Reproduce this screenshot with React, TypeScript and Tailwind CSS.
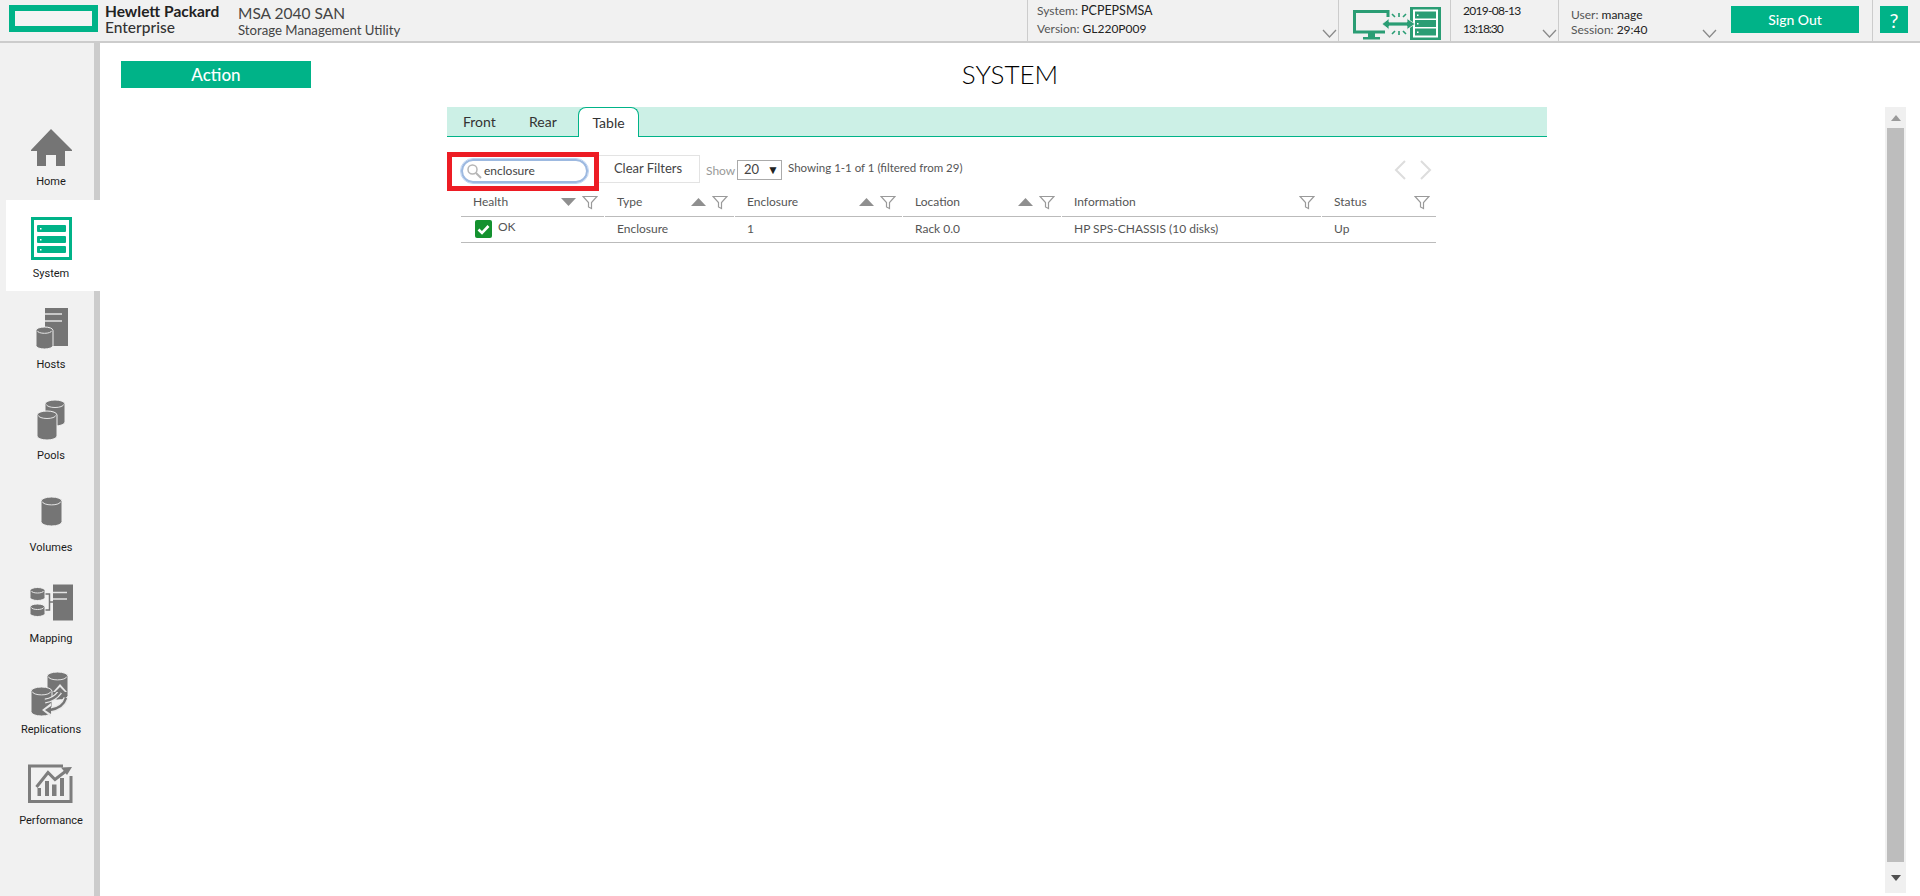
const GRAY = "#757575";
const BG = "#f1f1f1";
const GREEN = "#2a9d74";

function Can({ x, y, w, h }: { x: number; y: number; w: number; h: number }) {
  const r = w / 5;
  return (
    <>
      <path
        d={`M${x} ${y + r}a${w / 2} ${r} 0 0 1 ${w} 0V${y + h - r}a${w / 2} ${r} 0 0 1 ${-w} 0Z`}
        fill={GRAY}
        stroke={BG}
        strokeWidth="1"
      />
      <path d={`M${x + 1.5} ${y + r + 0.5}a${w / 2 - 1.5} ${r - 1} 0 0 0 ${w - 3} 0`} fill="none" stroke="#e4e4e4" strokeWidth="1" />
    </>
  );
}

const navIcons: Record<string, React.ReactNode> = {
  Home: <path d="M30 21L51 42V43H44V58H35V47H25V58H16V43H10V42Z" fill={GRAY} />,
  System: (
    <>
      <rect x="10" y="17" width="41" height="43" fill="#00b388" />
      <rect x="13" y="20" width="35" height="37" fill="#fff" />
      {[25, 36, 46].map((y) => (
        <g key={y}>
          <rect x="16" y={y} width="29" height="7" rx="1" fill="#00b388" />
          <rect x="19" y={y + 3} width="1.5" height="1.5" fill="#fff" />
        </g>
      ))}
    </>
  ),
  Hosts: (
    <>
      <path d="M24 17H47V55H24Z" fill={GRAY} />
      <path d="M24 23H41M24 30H41" stroke="#e4e4e4" strokeWidth="1.5" />
      <Can x={15} y={36} w={17} h={22} />
    </>
  ),
  Pools: (
    <>
      <Can x={24} y={18} w={20} h={26} />
      <Can x={16} y={29} w={20} h={29} />
    </>
  ),
  Volumes: <Can x={20} y={23} w={21} h={29} />,
  Mapping: (
    <>
      <path d="M32 19.5H52V55.5H32Z" fill={GRAY} />
      <path d="M32 27.5H46M32 34H46" stroke="#e4e4e4" strokeWidth="1.5" />
      <path d="M24 29H28.5V45H24M28.5 37H32" fill="none" stroke={GRAY} strokeWidth="1.5" />
      <Can x={9} y={22.5} w={15} h={13} />
      <Can x={9} y={39} w={15} h={12.5} />
    </>
  ),
  Replications: (
    <>
      <Can x={26} y={16} w={21} h={28} />
      <Can x={10} y={31} w={21} h={29} />
      <path d="M24 45Q33 44 39 36M45 42Q42 52 29 54" fill="none" stroke="#e8e8e8" strokeWidth="5" />
      <path d="M39 28L46 36H32ZM21 54L30 47V61Z" fill="#e8e8e8" />
      <path d="M24 45Q33 44 39 36M45 42Q42 52 29 54" fill="none" stroke={GRAY} strokeWidth="2.5" />
      <path d="M39 31L44 36H34ZM24 54L30 50V58Z" fill={GRAY} />
    </>
  ),
  Performance: (
    <>
      <path d="M50 29V54.5H8.5V19H42" fill="none" stroke="#7d7d7d" strokeWidth="3" />
      <path d="M16.5 41H20V49H16.5ZM24 34H28V49H24ZM31 37.5H35.5V49H31ZM39 31H43V49H39Z" fill="#7d7d7d" />
      <path d="M15.5 40L27 25.5L34 32.5L45 24" fill="none" stroke="#7d7d7d" strokeWidth="3" />
      <path d="M51 20L40 20.5L46 28Z" fill="#7d7d7d" />
    </>
  ),
};

const navItems = ["Home", "System", "Hosts", "Pools", "Volumes", "Mapping", "Replications", "Performance"];

function NavItem({ label }: { label: string }) {
  const active = label === "System";
  return (
    <div
      className={
        active
          ? "relative ml-[6px] flex h-[91.3px] w-[94px] shrink-0 flex-col items-center bg-white pl-[2px] pr-[6px]"
          : "flex h-[91.3px] w-[94px] shrink-0 flex-col items-center pl-[8px]"
      }
    >
      <svg width="60" height="64" viewBox="0 0 60 64">
        {navIcons[label]}
      </svg>
      <span className="pt-[1px] font-['Roboto',sans-serif] text-[11px] leading-[18px] text-[#1a1a1a]">{label}</span>
    </div>
  );
}

function Chevron() {
  return (
    <svg width="15" height="9" viewBox="0 0 15 9" className="shrink-0">
      <path d="M1 1L7.5 8L14 1" fill="none" stroke="#8a8a8a" strokeWidth="1.3" />
    </svg>
  );
}

function ConnectionIcon() {
  return (
    <svg width="88" height="33" viewBox="0 0 88 33">
      <path d="M35 10V4.5H1.5V25H32" fill="none" stroke={GREEN} strokeWidth="3" />
      <path d="M15 26H22V30H27V32.5H10V30H15Z" fill={GREEN} />
      <rect x="57" y="0" width="31" height="33" fill={GREEN} />
      <rect x="60" y="2.5" width="25" height="28" fill="#fff" />
      {[4.5, 13, 21.5].map((y) => (
        <g key={y}>
          <rect x="62" y={y} width="21" height="7" fill={GREEN} />
          <rect x="64" y={y + 3} width="1.5" height="1.5" fill="#fff" />
        </g>
      ))}
      <path d="M29 17L36 11.5V15H54V11.5L62 17L54 22.5V19H36V22.5Z" fill={GREEN} stroke={BG} strokeWidth="0.8" />
      <path d="M39 7l3 3M46 6v4M53 7l-3 3M39 27l3-3M46 28v-4M53 27l-3-3" stroke={GREEN} strokeWidth="1.6" />
    </svg>
  );
}

function FilterIcon() {
  return (
    <svg width="16" height="15" viewBox="0 0 16 15" className="shrink-0">
      <path d="M1 1.5H15L9.5 7.5V13.5L6.5 12V7.5Z" fill="none" stroke="#9a9a9a" strokeWidth="1.2" />
    </svg>
  );
}

function SortArrow({ down }: { down?: boolean }) {
  return (
    <svg width="15" height="8" viewBox="0 0 15 8" className="mr-[6px] shrink-0">
      <path d={down ? "M0 0H15L7.5 8Z" : "M0 8H15L7.5 0Z"} fill="#8f8f8f" />
    </svg>
  );
}

const columns = [
  { title: "Health", sort: "down" },
  { title: "Type", sort: "up" },
  { title: "Enclosure", sort: "up" },
  { title: "Location", sort: "up" },
  { title: "Information" },
  { title: "Status" },
];

export default function App() {
  return (
    <div className="flex h-[896px] w-[1920px] flex-col overflow-hidden bg-white font-['Lato',sans-serif] text-[12px] text-[#555]">
      {/* top bar */}
      <header className="flex h-[43px] shrink-0 border-b-2 border-[#ccc] bg-[#f1f1f1]">
        <div className="flex w-[1027px] items-start">
          <div className="ml-[9px] mt-[5px] h-[27px] w-[89px] border-[6px] border-[#00b388] bg-[#f4f4f4]" />
          <div className="ml-[7px] mt-[3px] w-[133px] text-[15.5px] leading-[16px] text-[#222]">
            <div className="font-bold">Hewlett Packard</div>
            <div className="font-medium text-[#333]">Enterprise</div>
          </div>
          <div className="mt-[4px] text-[#444]">
            <div className="text-[15.5px] leading-[18px]">MSA 2040 SAN</div>
            <div className="text-[13.2px] leading-[17px]">Storage Management Utility</div>
          </div>
        </div>
        <div className="flex w-[311px] justify-between border-l border-[#ccc] pl-[9px] pr-[1px]">
          <div className="pt-[2px] leading-[18px]">
            <div>
              System: <span className="text-[12.5px] text-[#222]">PCPEPSMSA</span>
            </div>
            <div>
              Version: <span className="text-[#222]">GL220P009</span>
            </div>
          </div>
          <div className="self-end pb-[3px]">
            <Chevron />
          </div>
        </div>
        <div className="flex w-[112px] border-l border-[#ccc] pl-[14px] pt-[7px]">
          <ConnectionIcon />
        </div>
        <div className="flex w-[108px] justify-between border-l border-[#ccc] pl-[12px] pr-[1px]">
          <div className="pt-[2px] leading-[18px] text-[#222]">
            <div className="tracking-[-0.7px]">2019-08-13</div>
            <div className="tracking-[-1px]">13:18:30</div>
          </div>
          <div className="self-end pb-[3px]">
            <Chevron />
          </div>
        </div>
        <div className="flex w-[314px] border-l border-[#ccc] pl-[12px]">
          <div className="w-[131px] pt-[7px] leading-[15px]">
            <div>
              User: <span className="text-[#222]">manage</span>
            </div>
            <div>
              Session: <span className="text-[#222]">29:40</span>
            </div>
          </div>
          <div className="self-end pb-[3px]">
            <Chevron />
          </div>
          <button className="ml-[14px] mt-[6px] h-[27px] w-[128px] bg-[#00b388] text-[14px] font-medium text-white">Sign Out</button>
        </div>
        <div className="border-l border-[#ccc] pl-[7px] pt-[6px]">
          <div className="flex h-[27px] w-[28px] items-center justify-center bg-[#00b388] text-[20px] text-white">?</div>
        </div>
      </header>

      <div className="flex min-h-0 flex-1">
        {/* left nav */}
        <nav className="flex w-[100px] shrink-0 flex-col border-r-[6px] border-[#ccc] bg-[#f1f1f1] pt-[65.4px]">
          {navItems.map((item) => (
            <NavItem key={item} label={item} />
          ))}
        </nav>

        <main className="min-w-0 flex-1 pt-[18px]">
          <div className="flex h-[27px] items-center pr-[176px]">
            <button className="ml-[21px] h-[27px] w-[190px] bg-[#00b388] text-[17px] font-medium text-white">Action</button>
            <h1 className="flex-1 text-center text-[26px] font-light leading-[27px] text-black">SYSTEM</h1>
          </div>

          <section className="ml-[347px] mt-[19px] w-[1100px]">
            {/* tabs */}
            <div className="flex h-[30px] items-end border-b border-[#00b388] bg-[#ccf0e6] pl-[16px] text-[14px] text-[#333]">
              <span className="mb-[4px] w-[66px]">Front</span>
              <span className="mb-[4px] w-[49px]">Rear</span>
              <span className="-mb-px flex h-[30px] w-[61px] items-center justify-center rounded-t-[8px] border border-b-0 border-[#00b388] bg-white">
                Table
              </span>
            </div>

            {/* filter row */}
            <div className="ml-0 mt-[15px] flex h-[39px] w-[989px] items-start">
              <div className="flex h-[39px] w-[152px] shrink-0 border-[5px] border-[#ed1c24] pl-[9px] pt-[2px]">
                <div className="flex h-[24px] w-[127px] items-center rounded-full border-2 border-[#9db9e0] pl-[3px] text-[12px] text-[#444] outline outline-1 outline-[#bcd3f2]">
                  <svg width="16" height="16" viewBox="0 0 16 16" className="shrink-0">
                    <circle cx="6.5" cy="6.5" r="4.5" fill="#fff" stroke="#b5b5b5" strokeWidth="1.5" />
                    <path d="M10 10L15 15" stroke="#b5b5b5" strokeWidth="2" />
                  </svg>
                  <span className="ml-[2px]">enclosure</span>
                </div>
              </div>
              <button className="mt-[3px] h-[28px] w-[101px] shrink-0 border border-l-0 border-[#e3e3e3] pr-[2px] text-[13px] text-[#444]">Clear Filters</button>
              <span className="ml-[6px] mt-[10px] w-[31px] text-[#999]">Show</span>
              <div className="mt-[8px] flex h-[20px] w-[45px] items-center border border-[#aaa] pl-[6px] text-[13px] text-[#444]">
                20
                <span className="ml-[8px] text-[12px] text-[#222]">▼</span>
              </div>
              <span className="ml-[6px] mt-[7px] text-[11.5px]">Showing 1-1 of 1 (filtered from 29)</span>
              <div className="ml-auto mr-[4px] mt-[8px] flex gap-[14px]">
                <svg width="12" height="20" viewBox="0 0 12 20">
                  <path d="M11 1L2 10L11 19" fill="none" stroke="#ddd" strokeWidth="2" />
                </svg>
                <svg width="12" height="20" viewBox="0 0 12 20">
                  <path d="M1 1L10 10L1 19" fill="none" stroke="#ddd" strokeWidth="2" />
                </svg>
              </div>
            </div>

            {/* table */}
            <div className="ml-[14px] w-[975px]">
              <div className="grid grid-cols-[143px_129px_167px_158px_259px_114px] gap-x-px">
                {columns.map((col) => (
                  <div key={col.title} className="flex h-[26px] items-center border-b border-[#bbb] pl-[12px] pr-[6px] pb-[3px]">
                    <span className="flex-1">{col.title}</span>
                    {col.sort && <SortArrow down={col.sort === "down"} />}
                    <FilterIcon />
                  </div>
                ))}
              </div>
              <div className="grid h-[26px] grid-cols-[143px_129px_167px_158px_259px_114px] items-center gap-x-px border-b border-[#bbb] pb-[1px]">
                <div className="flex items-start pl-[14px]">
                  <span className="flex h-[18px] w-[17px] items-center justify-center rounded-[2px] bg-[#14912f]">
                    <svg width="13" height="11" viewBox="0 0 13 11">
                      <path d="M1.5 5.5L5 9L11.5 2" fill="none" stroke="#fff" strokeWidth="2.6" />
                    </svg>
                  </span>
                  <span className="ml-[6px] -mt-[2px]">OK</span>
                </div>
                <div className="pl-[12px]">Enclosure</div>
                <div className="pl-[12px]">1</div>
                <div className="pl-[12px]">Rack 0.0</div>
                <div className="pl-[12px]">HP SPS-CHASSIS (10 disks)</div>
                <div className="pl-[12px]">Up</div>
              </div>
            </div>
          </section>
        </main>

        {/* scrollbar */}
        <div className="mb-[3px] mr-[14px] mt-[64px] flex w-[21px] shrink-0 flex-col items-center bg-[#f0f0f0]">
          <div className="flex h-[21px] items-center justify-center">
            <svg width="10" height="6" viewBox="0 0 10 6">
              <path d="M0 6H10L5 0Z" fill="#9a9a9a" />
            </svg>
          </div>
          <div className="w-[17px] flex-1 bg-[#bdbdbd]" />
          <div className="flex h-[31px] items-center justify-center">
            <svg width="10" height="6" viewBox="0 0 10 6">
              <path d="M0 0H10L5 6Z" fill="#505050" />
            </svg>
          </div>
        </div>
      </div>
    </div>
  );
}
